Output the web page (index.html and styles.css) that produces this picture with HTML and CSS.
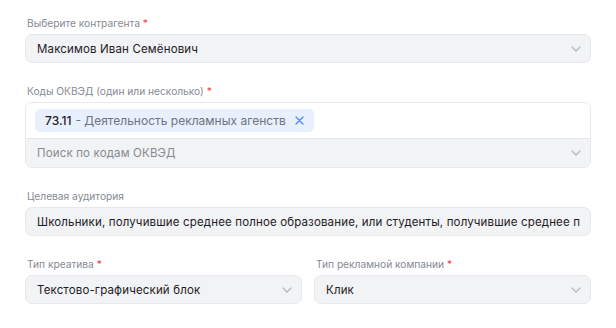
FILE: index.html
```html
<!DOCTYPE html>
<html>
<head>
    <link rel="stylesheet" href="styles.css">
</head>
<body>
    <div class="form">
        <div class="field">
            <div class="label">Выберите контрагента <span class="req">*</span></div>
            <div class="select">
                <span class="value">Максимов Иван Семёнович</span>
                <svg class="chevron" width="10" height="6" viewBox="0 0 10 6"><path d="M1 1l4 4 4-4" fill="none" stroke="#b4b9c1" stroke-width="1.3" stroke-linecap="round" stroke-linejoin="round"/></svg>
            </div>
        </div>

        <div class="field">
            <div class="label">Коды ОКВЭД (один или несколько) <span class="req">*</span></div>
            <div class="multi">
                <div class="tags">
                    <span class="tag"><b>73.11</b> - Деятельность рекламных агенств
                        <svg class="tag-x" width="9" height="9" viewBox="0 0 9 9"><path d="M1 1l7 7M8 1l-7 7" fill="none" stroke="#4a8cf0" stroke-width="1.3" stroke-linecap="round"/></svg>
                    </span>
                </div>
                <div class="search">
                    <span class="placeholder">Поиск по кодам ОКВЭД</span>
                    <svg class="chevron" width="10" height="6" viewBox="0 0 10 6"><path d="M1 1l4 4 4-4" fill="none" stroke="#b4b9c1" stroke-width="1.3" stroke-linecap="round" stroke-linejoin="round"/></svg>
                </div>
            </div>
        </div>

        <div class="field">
            <div class="label">Целевая аудитория</div>
            <div class="input">
                <span class="value">Школьники, получившие среднее полное образование, или студенты, получившие среднее п</span>
            </div>
        </div>

        <div class="row">
            <div class="field">
                <div class="label">Тип креатива <span class="req">*</span></div>
                <div class="select">
                    <span class="value">Текстово-графический блок</span>
                    <svg class="chevron" width="10" height="6" viewBox="0 0 10 6"><path d="M1 1l4 4 4-4" fill="none" stroke="#b4b9c1" stroke-width="1.3" stroke-linecap="round" stroke-linejoin="round"/></svg>
                </div>
            </div>
            <div class="field">
                <div class="label">Тип рекламной компании <span class="req">*</span></div>
                <div class="select">
                    <span class="value">Клик</span>
                    <svg class="chevron" width="10" height="6" viewBox="0 0 10 6"><path d="M1 1l4 4 4-4" fill="none" stroke="#b4b9c1" stroke-width="1.3" stroke-linecap="round" stroke-linejoin="round"/></svg>
                </div>
            </div>
        </div>
    </div>
</body>
</html>
```

FILE: styles.css
```css
body {
    margin: 0;
    padding: 15px 25px 0;
    font-family: Inter, "Noto Sans", sans-serif;
    background: #fff;
    color: #1e2024;
}
.field {
    margin-bottom: 20px;
    min-width: 0;
}
.label {
    font-size: 10.2px;
    line-height: 16px;
    color: #858a93;
    margin-bottom: 3px;
    padding-left: 2px;
}
.req {
    color: #f0453a;
}
.select,
.input,
.search {
    display: flex;
    align-items: center;
    height: 29px;
    box-sizing: border-box;
    padding: 0 9px 0 11px;
    background-color: #f2f3f5;
    border: 1px solid #e7e8eb;
    border-radius: 7px;
    font-size: 11.5px;
    letter-spacing: 0.15px;
}
.value {
    flex: 1;
    white-space: nowrap;
    overflow: hidden;
}
.chevron {
    flex: none;
    margin-left: 8px;
}
.multi {
    border: 1px solid #e7e8eb;
    border-radius: 7px;
    overflow: hidden;
}
.tags {
    padding: 6px 9px;
    background: #fff;
}
.tag {
    display: inline-flex;
    align-items: center;
    height: 23px;
    padding: 0 10px;
    background-color: #e8f0fd;
    border-radius: 5px;
    font-size: 12px;
    color: #6f747c;
}
.tag b {
    font-weight: 500;
    color: #1e2024;
    margin-right: 4px;
}
.tag-x {
    margin-left: 9px;
}
.search {
    border: none;
    border-top: 1px solid #e7e8eb;
    border-radius: 0;
    height: 29px;
}
.placeholder {
    flex: 1;
    color: #858a93;
}
.row {
    display: grid;
    grid-template-columns: 1fr 1fr;
    gap: 12px;
}
```
